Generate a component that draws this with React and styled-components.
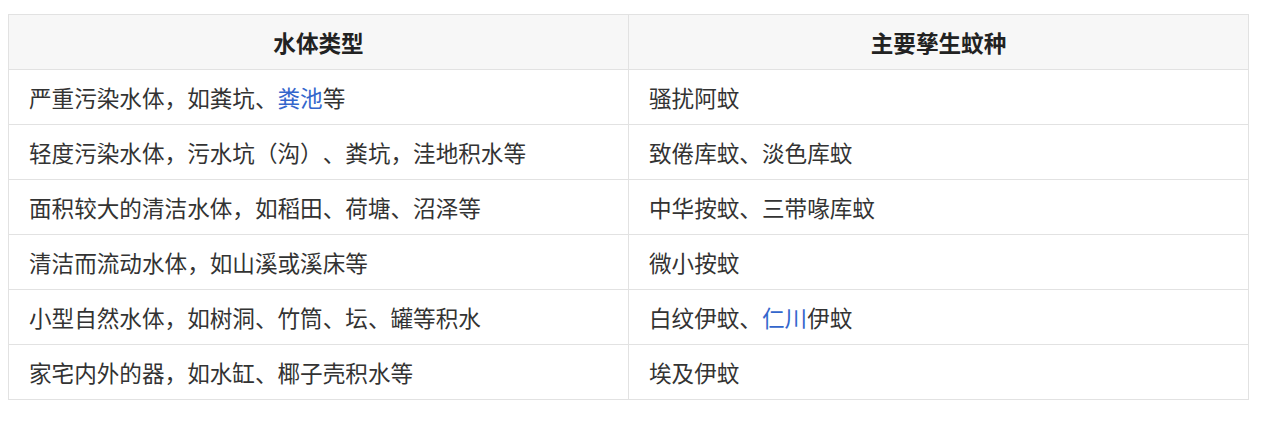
import React from 'react';
import styled, { createGlobalStyle } from 'styled-components';

const GlobalStyle = createGlobalStyle`
  body {
    margin: 0;
    background: #ffffff;
    font-family: 'Noto Sans CJK SC', 'Noto Sans', sans-serif;
  }
`;

const Page = styled.div`
  padding: 14px 0 0 8px;
`;

const Table = styled.table`
  width: 1241px;
  border-collapse: collapse;
  table-layout: fixed;
  color: #333333;
  font-size: 22.6px;
  text-spacing-trim: space-all;
`;

const HeadCell = styled.th`
  width: 50%;
  height: 54px;
  padding: 0 20px;
  background: #f7f7f7;
  border: 1px solid #e2e2e2;
  font-weight: 700;
  color: #222222;
  text-align: center;
`;

const Cell = styled.td`
  height: 54px;
  padding: 0 19px 0 20px;
  border: 1px solid #e2e2e2;
  text-align: left;
  white-space: nowrap;
`;

const WikiLink = styled.a`
  color: #3366cc;
  text-decoration: none;
`;

const rows = [
  [<>严重污染水体，如粪坑、<WikiLink href="#">粪池</WikiLink>等</>, '骚扰阿蚊'],
  ['轻度污染水体，污水坑（沟）、粪坑，洼地积水等', '致倦库蚊、淡色库蚊'],
  ['面积较大的清洁水体，如稻田、荷塘、沼泽等', '中华按蚊、三带喙库蚊'],
  ['清洁而流动水体，如山溪或溪床等', '微小按蚊'],
  ['小型自然水体，如树洞、竹筒、坛、罐等积水', <>白纹伊蚊、<WikiLink href="#">仁川</WikiLink>伊蚊</>],
  ['家宅内外的器，如水缸、椰子壳积水等', '埃及伊蚊'],
];

const App = () => (
  <Page>
    <GlobalStyle />
    <Table>
      <thead>
        <tr>
          <HeadCell>水体类型</HeadCell>
          <HeadCell>主要孳生蚊种</HeadCell>
        </tr>
      </thead>
      <tbody>
        {rows.map((row, i) => (
          <tr key={i}>
            <Cell>{row[0]}</Cell>
            <Cell>{row[1]}</Cell>
          </tr>
        ))}
      </tbody>
    </Table>
  </Page>
);

export default App;
